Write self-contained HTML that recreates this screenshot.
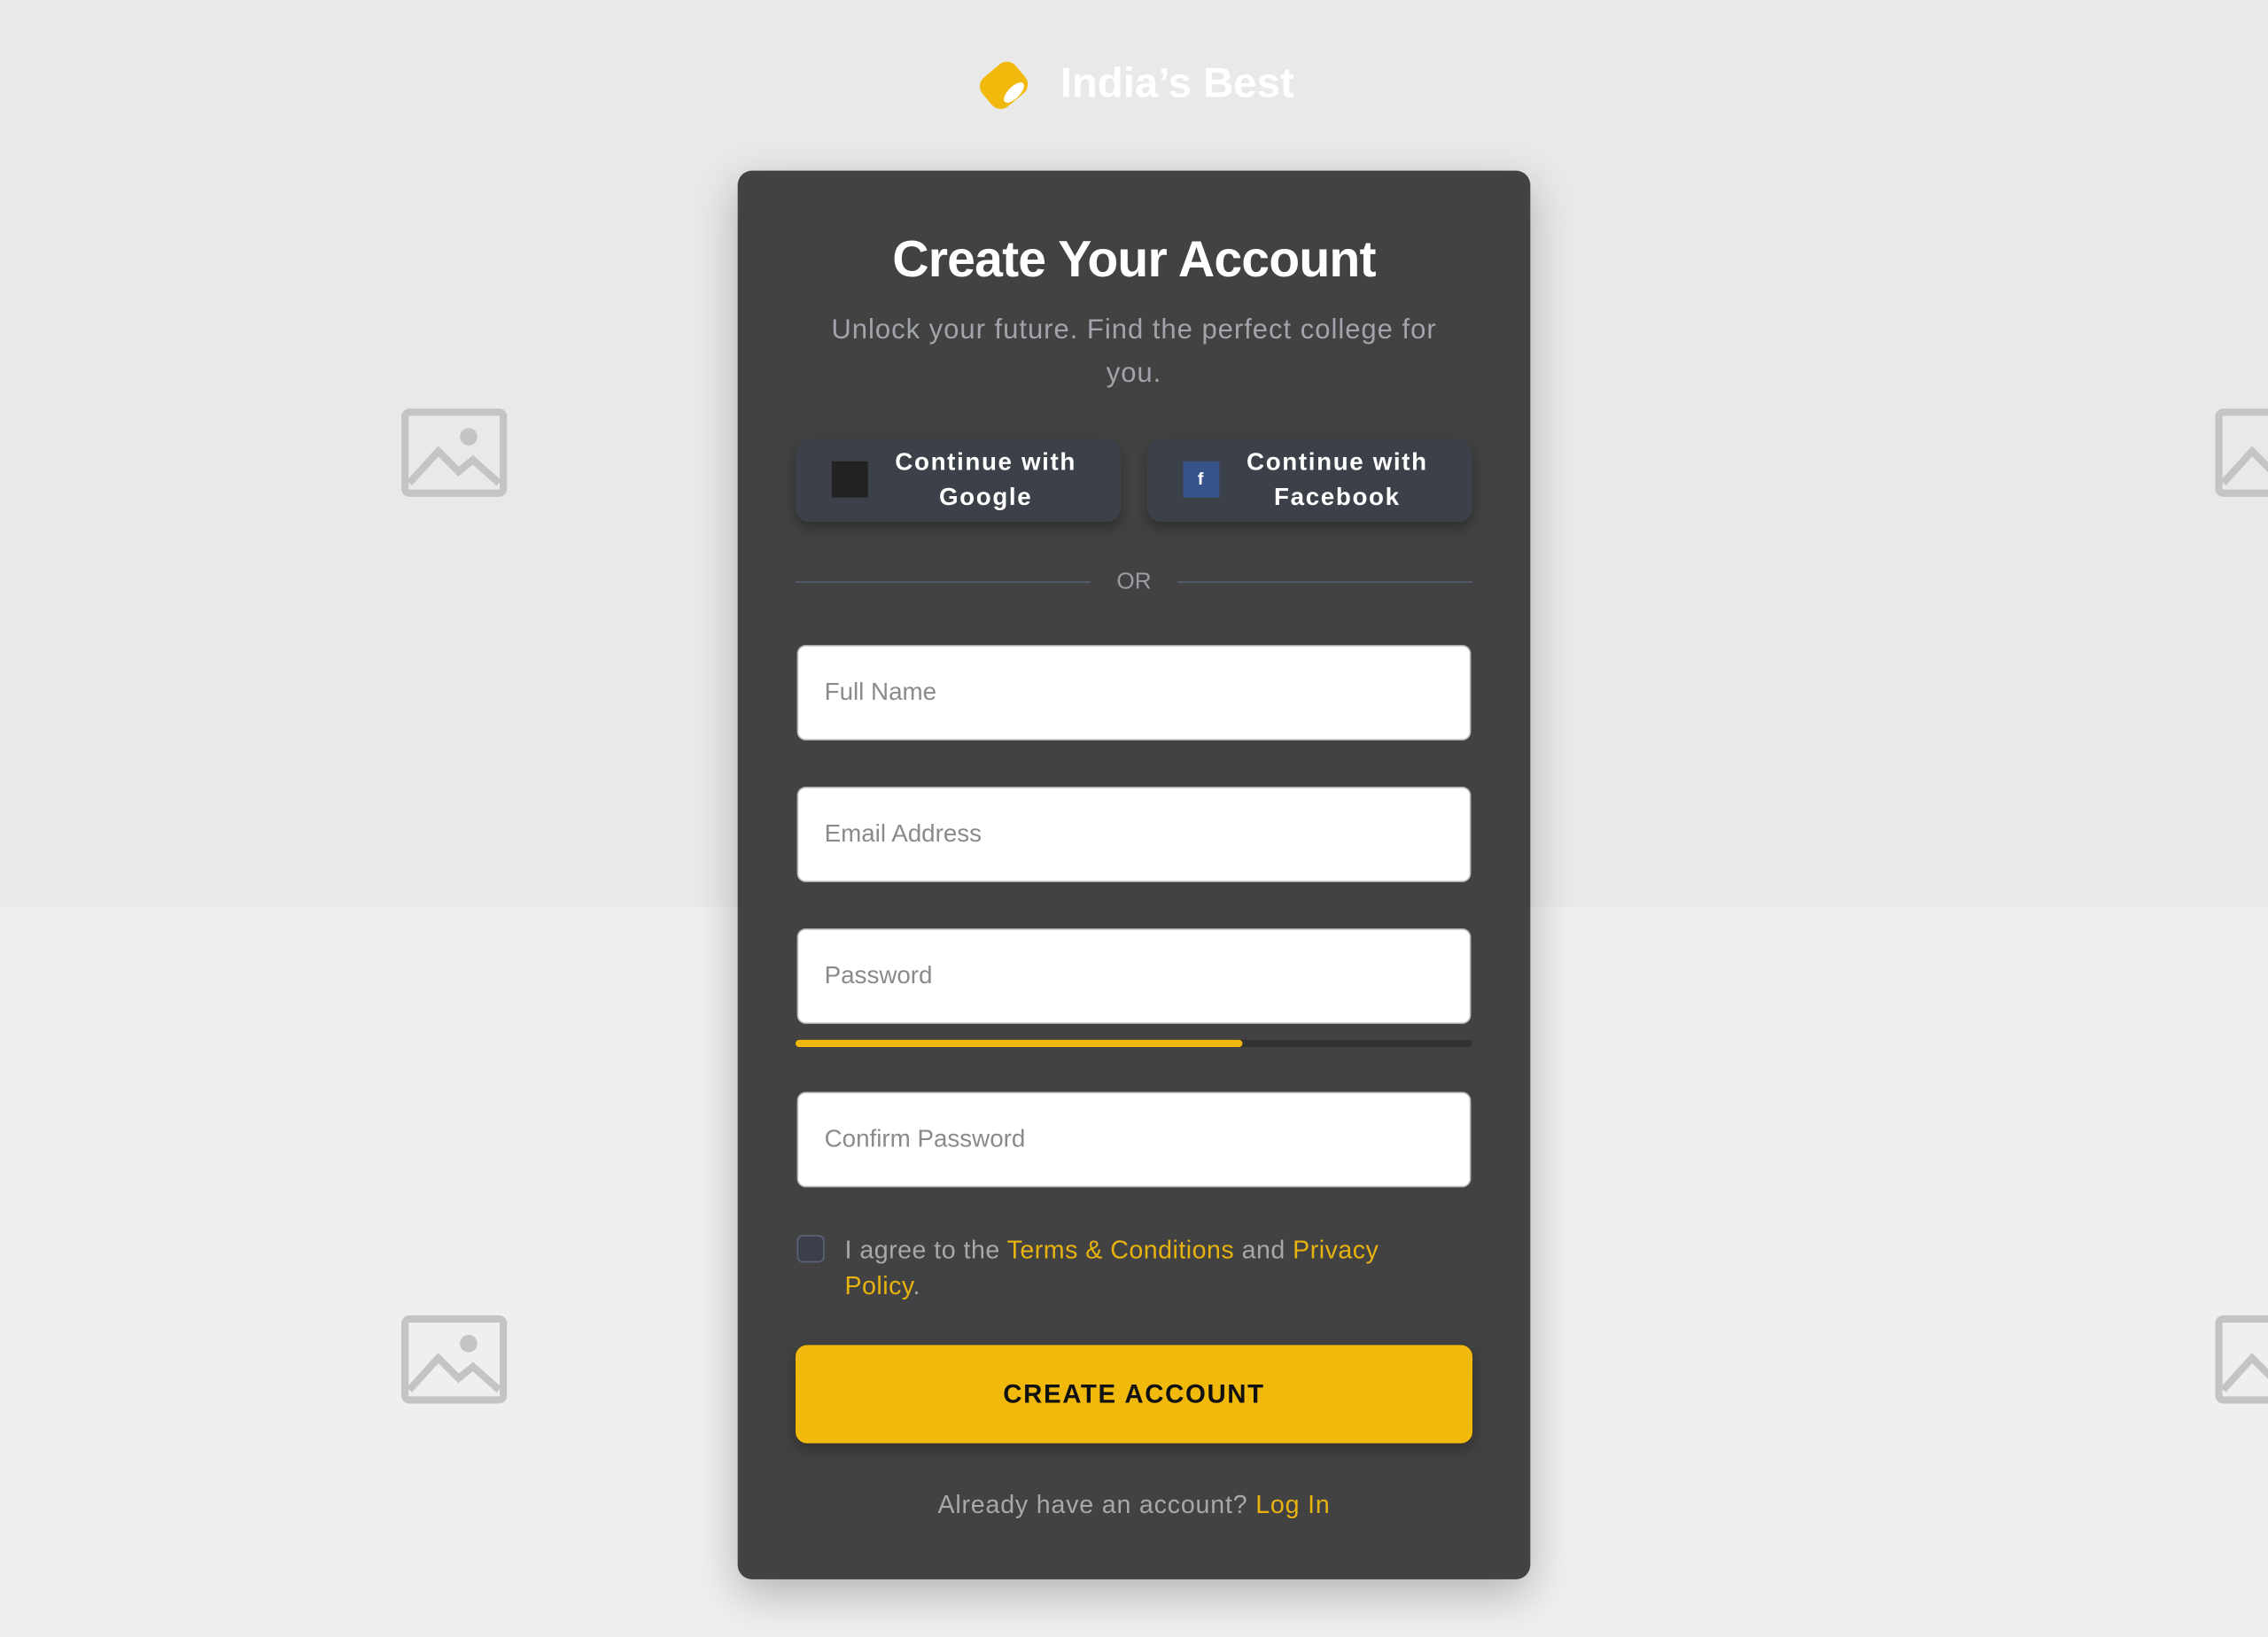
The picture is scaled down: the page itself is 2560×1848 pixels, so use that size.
<!DOCTYPE html>
<html><head><meta charset="utf-8"><style>
html,body{margin:0;padding:0;width:2560px;height:1848px;overflow:hidden;background:#ececec}
#w{position:absolute;left:0;top:0;width:1568px;height:1132px;transform:scale(1.632653);transform-origin:0 0;font-family:"Liberation Sans",sans-serif}
.bgt{position:absolute;left:0;top:0;width:1568px;height:627px;background:#e9e9e9}
.bgb{position:absolute;left:0;top:627px;width:1568px;height:505px;background:#efefef}
.ph{position:absolute}
.card{position:absolute;left:510px;top:118px;width:548px;height:974px;background:#424242;border-radius:10px;box-shadow:0 10px 30px rgba(0,0,0,.25)}
.abs{position:absolute}
.sb{position:absolute;top:303px;width:225px;height:58px;background:#3c4048;border-radius:10px;box-shadow:0 4px 8px rgba(0,0,0,.3);color:#fff;font-weight:bold;font-size:17px;letter-spacing:1px;line-height:24px}
.inp{position:absolute;left:551px;background:#fff;border:1px solid #bbb;border-radius:6px;color:#8a8a8a;font-size:17px;line-height:64px;padding-left:18px;box-sizing:border-box;width:466px;height:66px}
.y{color:#e8b30e}
</style></head><body><div id="w">
<div class="bgt"></div><div class="bgb"></div>
<svg class="ph" style="left:277px;top:282px" width="74" height="62" viewBox="0 0 74 62"><rect x="3" y="3" width="68" height="56" rx="3" fill="none" stroke="#c4c4c4" stroke-width="5"/><path d="M6 52 L26 30 L40 44 L50 36 L68 52" fill="none" stroke="#c4c4c4" stroke-width="5"/><circle cx="47" cy="20" r="6" fill="#c4c4c4"/></svg>
<svg class="ph" style="left:277px;top:909px" width="74" height="62" viewBox="0 0 74 62"><rect x="3" y="3" width="68" height="56" rx="3" fill="none" stroke="#c4c4c4" stroke-width="5"/><path d="M6 52 L26 30 L40 44 L50 36 L68 52" fill="none" stroke="#c4c4c4" stroke-width="5"/><circle cx="47" cy="20" r="6" fill="#c4c4c4"/></svg>
<svg class="ph" style="left:1531px;top:282px" width="74" height="62" viewBox="0 0 74 62"><rect x="3" y="3" width="68" height="56" rx="3" fill="none" stroke="#c4c4c4" stroke-width="5"/><path d="M6 52 L26 30 L40 44" fill="none" stroke="#c4c4c4" stroke-width="5"/></svg>
<svg class="ph" style="left:1531px;top:909px" width="74" height="62" viewBox="0 0 74 62"><rect x="3" y="3" width="68" height="56" rx="3" fill="none" stroke="#c4c4c4" stroke-width="5"/><path d="M6 52 L26 30 L40 44" fill="none" stroke="#c4c4c4" stroke-width="5"/></svg>
<svg class="abs" style="left:675px;top:40px" width="40" height="40" viewBox="0 0 40 40"><rect x="4" y="6" width="30" height="26" rx="8" transform="rotate(-40 19 19)" fill="#f0b90b"/><ellipse cx="26" cy="24" rx="9" ry="4" transform="rotate(-45 26 24)" fill="#fff"/></svg>
<div class="abs" style="left:733px;top:42px;font-size:29px;font-weight:bold;color:#fff">India’s Best</div>
<div class="card"></div>
<div class="abs" style="left:510px;width:548px;top:160px;text-align:center;color:#fff;font-size:35px;font-weight:bold;letter-spacing:-0.5px">Create Your Account</div>
<div class="abs" style="left:554px;width:460px;top:214px;text-align:center;color:#a2a4ab;font-size:19px;line-height:30px;letter-spacing:.6px">Unlock your future. Find the perfect college for you.</div>
<div class="sb" style="left:550px"><div class="abs" style="left:25px;top:16px;width:25px;height:25px;background:#222"></div><div class="abs" style="left:60px;width:143px;top:5px;text-align:center">Continue with Google</div></div>
<div class="sb" style="left:793px"><div class="abs" style="left:25px;top:16px;width:25px;height:25px;background:#37548a;color:#fff;font-size:12px;text-align:center;line-height:25px">f</div><div class="abs" style="left:60px;width:143px;top:5px;text-align:center">Continue with Facebook</div></div>
<div class="abs" style="left:550px;top:402px;width:204px;height:1px;background:#566070"></div>
<div class="abs" style="left:814px;top:402px;width:204px;height:1px;background:#566070"></div>
<div class="abs" style="left:754px;width:60px;top:394px;text-align:center;color:#9a9ca4;font-size:16px">OR</div>
<div class="inp" style="top:446px">Full Name</div>
<div class="inp" style="top:544px">Email Address</div>
<div class="inp" style="top:642px">Password</div>
<div class="abs" style="left:550px;top:719px;width:468px;height:5px;background:#333;border-radius:3px"></div>
<div class="abs" style="left:550px;top:719px;width:309px;height:5px;background:#f0b90b;border-radius:3px"></div>
<div class="inp" style="top:755px">Confirm Password</div>
<div class="abs" style="left:551px;top:854px;width:17px;height:17px;border:1px solid #5a6478;background:#3a3f4a;border-radius:4px"></div>
<div class="abs" style="left:584px;top:852px;width:420px;color:#a8a8a8;font-size:17.5px;line-height:25px;letter-spacing:.3px">I agree to the <span class="y">Terms &amp; Conditions</span> and <span class="y">Privacy Policy</span>.</div>
<div class="abs" style="left:550px;top:930px;width:468px;height:68px;background:#f0b90b;border-radius:8px;box-shadow:0 4px 10px rgba(0,0,0,.3);text-align:center;line-height:68px;font-weight:bold;font-size:18px;letter-spacing:1px;color:#111">CREATE ACCOUNT</div>
<div class="abs" style="left:510px;width:548px;top:1030px;text-align:center;color:#a8a8a8;font-size:17.5px;letter-spacing:.5px">Already have an account? <span class="y">Log In</span></div>
</div></body></html>
